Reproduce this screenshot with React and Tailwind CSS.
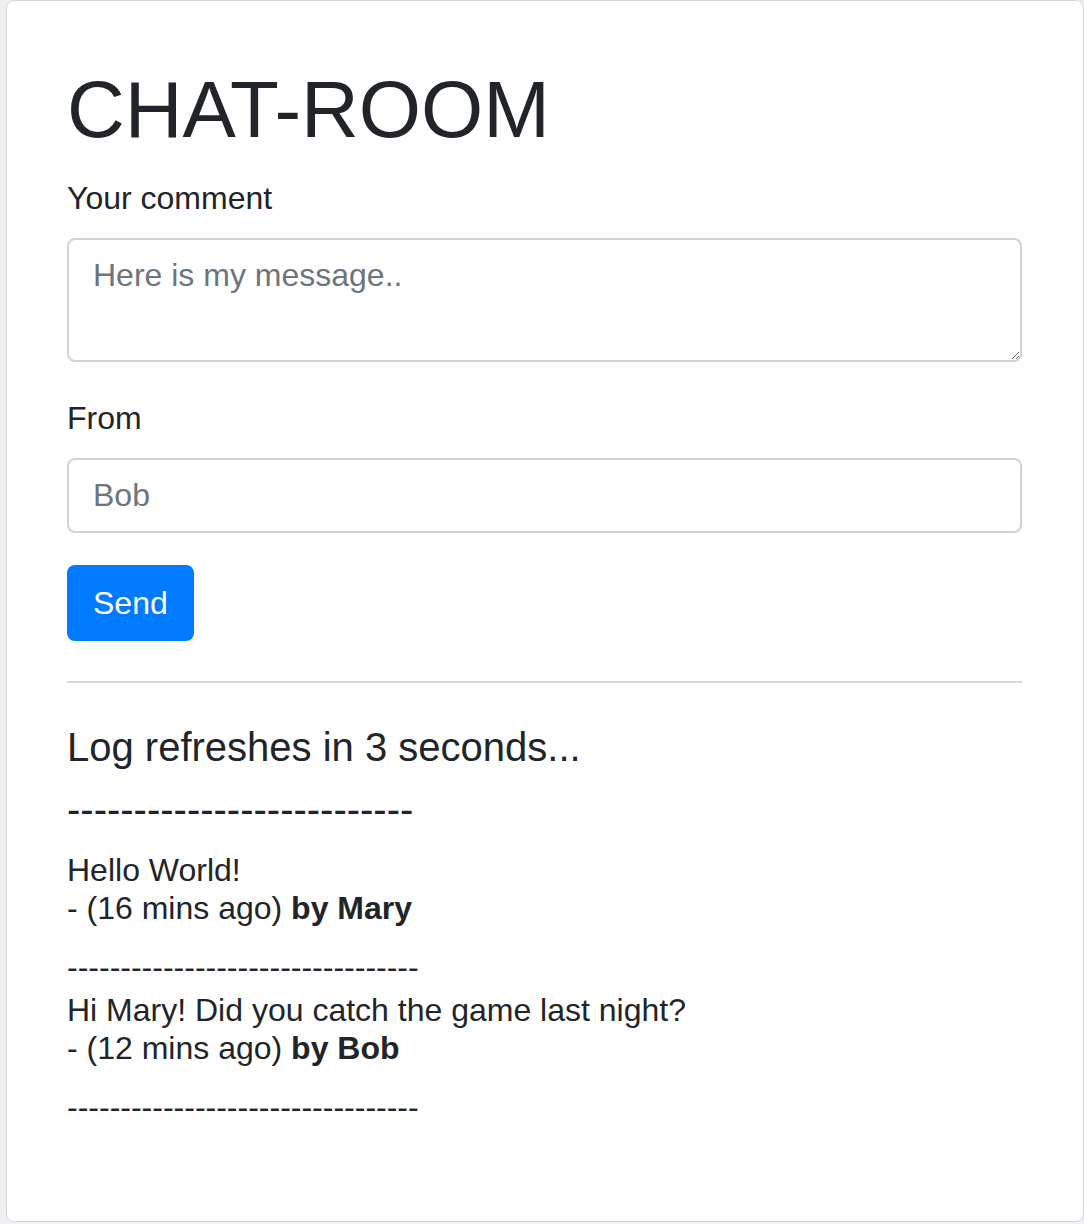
import React from 'react';

const messages = [
  { text: 'Hello World!', ago: '16 mins ago', author: 'Mary' },
  { text: 'Hi Mary! Did you catch the game last night?', ago: '12 mins ago', author: 'Bob' },
];

export default function App() {
  return (
    <div className="min-h-[1224px] bg-[#eff0f4] pl-[6px] pb-[2px] font-['Liberation_Sans',Arial,sans-serif] text-[#212529]">
      <div className="h-[1222px] bg-white border border-[#d6d6d6] rounded-[8px] pl-[60px] pr-[61px] pt-[61px]">
        <h1 className="text-[80px] leading-[96px] font-normal mb-[16px]">CHAT-ROOM</h1>

        <form onSubmit={e => e.preventDefault()}>
          <div className="mb-[32px]">
            <label className="block text-[32px] leading-[48px] mb-[16px]">Your comment</label>
            <textarea
              rows={2}
              placeholder="Here is my message.."
              className="block w-full h-[124px] border-2 border-[#ced4da] rounded-[8px] px-[24px] pt-[11px] pb-[13px] text-[32px] leading-[48px] text-[#495057] placeholder-[#6c757d] outline-none"
            />
          </div>

          <div className="mb-[32px]">
            <label className="block text-[32px] leading-[48px] mb-[16px]">From</label>
            <input
              type="text"
              placeholder="Bob"
              className="block w-full h-[75px] border-2 border-[#ced4da] rounded-[8px] px-[24px] pt-[11px] pb-[12px] text-[32px] leading-[48px] text-[#495057] placeholder-[#6c757d] outline-none"
            />
          </div>

          <button
            type="submit"
            className="h-[76px] bg-[#007bff] border-2 border-[#007bff] rounded-[8px] px-[24px] text-[32px] leading-[48px] text-white"
          >
            Send
          </button>
        </form>

        <hr className="mt-[40px] mb-[40px] border-0 border-t-2 border-[#d9d9d9]" />

        <h5 className="text-[40px] leading-[48px] font-normal mb-[14px]">Log refreshes in 3 seconds...</h5>
        <h5 className="text-[40px] leading-[48px] font-normal mb-[18px]">--------------------------</h5>

        {messages.map((m, i) => (
          <div key={i}>
            <p className="text-[32px] leading-[38.4px] mb-[15px]">
              {m.text}
              <br />- ({m.ago}) <b className="font-bold">by {m.author}</b>
            </p>
            <div className="text-[32px] leading-[48px]">---------------------------------</div>
          </div>
        ))}
      </div>
    </div>
  );
}
